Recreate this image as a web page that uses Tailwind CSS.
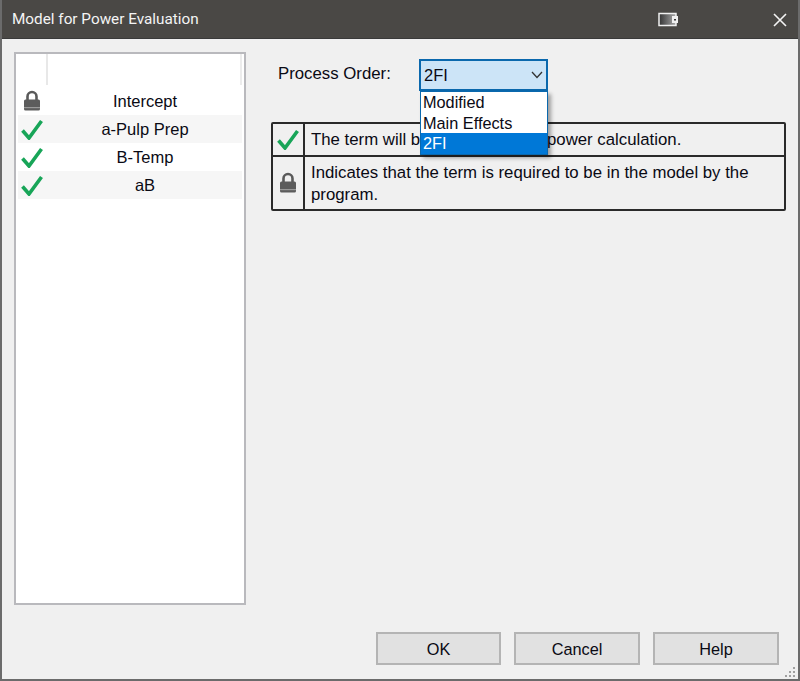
<!DOCTYPE html>
<html lang="en">
<head>
<meta charset="UTF-8">
<script src="https://cdn.jsdelivr.net/npm/@tailwindcss/browser@4"></script>
<title>Model for Power Evaluation</title>
</head>
<body class="bg-[#f0f0f0]">
<div class="w-[800px] h-[681px] flex flex-col overflow-hidden relative bg-[#f0f0f0] border-l-2 border-r-2 border-b-2 border-[#6b6b6b] font-['Liberation_Sans',sans-serif] text-[16.5px] text-[#0a0a14]">
  <!-- title bar -->
  <div class="h-[39px] -mx-[2px] shrink-0 flex items-center bg-[#4a4845] border-b border-[#3a3a3a] text-[#f4f4f4] text-[15.3px] font-['Roboto',sans-serif] pl-[12px] pt-[1px]">
    <span class="flex-1">Model for Power Evaluation</span>
    <svg class="mr-[93px]" width="22" height="16" viewBox="0 0 22 16">
      <defs><linearGradient id="g" x1="0" x2="1"><stop offset="0" stop-color="#333"/><stop offset="1" stop-color="#aaa"/></linearGradient></defs>
      <rect x="1" y="1.5" width="17" height="12" fill="url(#g)" stroke="#f0f0f0" stroke-width="1.5"/>
      <rect x="14" y="4" width="6" height="7" fill="#f0f0f0"/>
      <rect x="16" y="7" width="2" height="1.5" fill="#333"/>
    </svg>
    <svg class="mr-[13px]" width="14" height="14" viewBox="0 0 14 14"><path d="M1 1 L13 13 M13 1 L1 13" stroke="#f4f4f4" stroke-width="1.6" fill="none"/></svg>
  </div>

  <div class="flex-1 flex pl-[12px] pt-[13px] relative">
    <!-- term list -->
    <div class="w-[232px] h-[553px] shrink-0 bg-white border-2 border-[#b9b9bd] px-[2px]">
      <div class="h-[33px] flex pb-[2px]">
        <div class="w-[30px] border-r-2 border-[#e8e8e8]"></div>
        <div class="flex-1 border-r-2 border-[#ececec]"></div>
      </div>
      <div class="h-[28px] flex items-center">
        <div class="w-[30px] flex justify-center pr-[2px]">
          <svg width="18" height="22" viewBox="0 0 18 22"><path d="M4.5 10 V6.5 a4.5 4.5 0 0 1 9 0 V10" fill="none" stroke="#5a5a5a" stroke-width="2.6"/><rect x="1" y="9.5" width="16" height="11" rx="1.5" fill="#5c5c5c"/><rect x="1" y="17" width="16" height="1.2" fill="#9a9a9a"/></svg>
        </div>
        <div class="flex-1 text-center">Intercept</div>
      </div>
      <div class="h-[28px] flex items-center bg-[#f6f6f6]">
        <div class="w-[30px] flex justify-center pr-[2px]">
          <svg width="22" height="21" viewBox="0 0 22 21"><path d="M1.5 11.5 L8 19 L20.5 2" fill="none" stroke="#18a558" stroke-width="3.6"/></svg>
        </div>
        <div class="flex-1 text-center">a-Pulp Prep</div>
      </div>
      <div class="h-[28px] flex items-center">
        <div class="w-[30px] flex justify-center pr-[2px]">
          <svg width="22" height="21" viewBox="0 0 22 21"><path d="M1.5 11.5 L8 19 L20.5 2" fill="none" stroke="#18a558" stroke-width="3.6"/></svg>
        </div>
        <div class="flex-1 text-center">B-Temp</div>
      </div>
      <div class="h-[28px] flex items-center bg-[#f6f6f6]">
        <div class="w-[30px] flex justify-center pr-[2px]">
          <svg width="22" height="21" viewBox="0 0 22 21"><path d="M1.5 11.5 L8 19 L20.5 2" fill="none" stroke="#18a558" stroke-width="3.6"/></svg>
        </div>
        <div class="flex-1 text-center">aB</div>
      </div>
    </div>

    <!-- right side -->
    <div class="ml-[25px] w-[515px]">
      <div class="h-[32px] mt-[7px] flex items-center">
        <span class="ml-[7px] w-[141px] text-[16.8px] pb-[2px]">Process Order:</span>
        <div class="w-[129px] h-[32px] flex items-center justify-between bg-[#cce4f7] border-2 border-[#0a68ad] pl-[3px] pr-[3px]">
          <span>2FI</span>
          <svg width="12" height="8" viewBox="0 0 12 8"><path d="M1 1 L6 6.5 L11 1" fill="none" stroke="#333" stroke-width="1.3"/></svg>
        </div>
      </div>
      <div class="mt-[31px] border-2 border-[#2a2a2a] rounded-[2px] w-[515px] text-[16.8px]">
        <div class="h-[33px] flex border-b-2 border-[#2a2a2a]">
          <div class="w-[32px] border-r-2 border-[#2a2a2a] flex items-center justify-center">
            <svg width="22" height="21" viewBox="0 0 22 21"><path d="M1.5 11.5 L8 19 L20.5 2" fill="none" stroke="#18a558" stroke-width="3.6"/></svg>
          </div>
          <div class="flex-1 pl-[6px] leading-[31px]">The term will be included in the power calculation.</div>
        </div>
        <div class="h-[52px] flex">
          <div class="w-[32px] border-r-2 border-[#2a2a2a] flex items-center justify-center">
            <svg width="18" height="22" viewBox="0 0 18 22"><path d="M4.5 10 V6.5 a4.5 4.5 0 0 1 9 0 V10" fill="none" stroke="#5a5a5a" stroke-width="2.6"/><rect x="1" y="9.5" width="16" height="11" rx="1.5" fill="#5c5c5c"/><rect x="1" y="17" width="16" height="1.2" fill="#9a9a9a"/></svg>
          </div>
          <div class="flex-1 pl-[6px] pt-[5px] leading-[21.5px]">Indicates that the term is required to be in the model by the program.</div>
        </div>
      </div>
    </div>

    <!-- open dropdown -->
    <div class="absolute left-[418px] top-[52px] w-[128px] h-[64px] bg-white border border-[#0a68ad] shadow-[3px_3px_4px_rgba(0,0,0,0.35)] leading-[20.5px] text-[16.3px]">
      <div class="pl-[2px]">Modified</div>
      <div class="pl-[2px]">Main Effects</div>
      <div class="pl-[2px] bg-[#0078d7] text-white">2FI</div>
    </div>
  </div>

  <!-- buttons -->
  <div class="absolute left-[374px] top-[632px] flex gap-[13px] text-[16.3px]">
    <button class="w-[125px] h-[33px] pt-[1px] bg-[#e1e1e1] border-2 border-[#b4b4b4]">OK</button>
    <button class="w-[126px] h-[33px] pt-[1px] bg-[#e1e1e1] border-2 border-[#b4b4b4]">Cancel</button>
    <button class="w-[126px] h-[33px] pt-[1px] bg-[#e1e1e1] border-2 border-[#b4b4b4]">Help</button>
  </div>

  <!-- resize grip -->
  <svg class="absolute right-[2px] bottom-[1px]" width="11" height="11" viewBox="0 0 11 11" fill="#a0a0a0">
    <rect x="8" y="0" width="2" height="2"/><rect x="4" y="4" width="2" height="2"/><rect x="8" y="4" width="2" height="2"/><rect x="0" y="8" width="2" height="2"/><rect x="4" y="8" width="2" height="2"/><rect x="8" y="8" width="2" height="2"/>
  </svg>
</div>
</body>
</html>
